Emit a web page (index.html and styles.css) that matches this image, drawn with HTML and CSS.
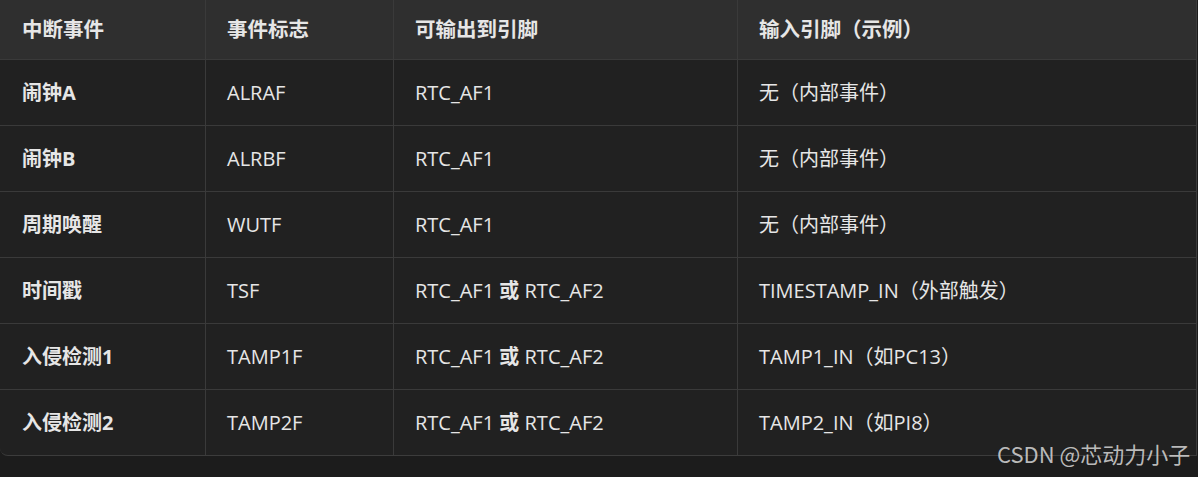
FILE: index.html
```html
<!DOCTYPE html>
<html lang="zh">
<head>
<meta charset="utf-8">
<link rel="stylesheet" href="styles.css">
</head>
<body>
<div class="wrap">
  <table class="tbl">
    <colgroup>
      <col class="c1"><col class="c2"><col class="c3"><col class="c4">
    </colgroup>
    <thead>
      <tr><th>中断事件</th><th>事件标志</th><th>可输出到引脚</th><th>输入引脚（示例）</th></tr>
    </thead>
    <tbody>
      <tr><td class="b">闹钟A</td><td>ALRAF</td><td>RTC_AF1</td><td>无（内部事件）</td></tr>
      <tr><td class="b">闹钟B</td><td>ALRBF</td><td>RTC_AF1</td><td>无（内部事件）</td></tr>
      <tr><td class="b">周期唤醒</td><td>WUTF</td><td>RTC_AF1</td><td>无（内部事件）</td></tr>
      <tr><td class="b">时间戳</td><td>TSF</td><td>RTC_AF1 <strong>或</strong> RTC_AF2</td><td>TIMESTAMP_IN（外部触发）</td></tr>
      <tr><td class="b">入侵检测1</td><td>TAMP1F</td><td>RTC_AF1 <strong>或</strong> RTC_AF2</td><td>TAMP1_IN（如PC13）</td></tr>
      <tr><td class="b">入侵检测2</td><td>TAMP2F</td><td>RTC_AF1 <strong>或</strong> RTC_AF2</td><td>TAMP2_IN（如PI8）</td></tr>
    </tbody>
  </table>
  <div class="wm">CSDN @芯动力小子</div>
</div>
</body>
</html>
```
FILE: styles.css
```css
html, body {
  margin: 0;
  padding: 0;
  background: #1c1c1c;
}
body {
  font-family: "Open Sans", "Noto Sans CJK SC", sans-serif;
  color: #e6e6e6;
  font-size: 20px;
}
.wrap {
  position: relative;
  width: 1198px;
  height: 477px;
}
.tbl {
  width: 1197px;
  border-collapse: separate;
  border-spacing: 0;
  border-right: 1px solid #3c3c3c;
  border-bottom: 1px solid #3c3c3c;
  border-bottom-left-radius: 8px;
  overflow: hidden;
  table-layout: fixed;
  background: #212121;
}
.c1 { width: 205px; }
.c2 { width: 188px; }
.c3 { width: 344px; }
.c4 { width: auto; }
th, td {
  text-align: left;
  padding: 0 0 0 21px;
  border-left: 1px solid #3a3a3a;
  border-bottom: 1px solid #3a3a3a;
  white-space: nowrap;
  line-height: 1.2;
}
th:first-child, td:first-child { border-left: none; padding-left: 22px; }
tbody tr:last-child td { border-bottom: none; }
th {
  background: #2f2f2f;
  height: 56px;
  padding-bottom: 3px;
  font-weight: 700;
  font-family: "Noto Sans CJK SC", sans-serif;
  font-size: 20.5px;
}
td {
  height: 65px;
  font-weight: 400;
}
td.b {
  font-weight: 700;
  font-family: "Open Sans", "Noto Sans CJK SC", sans-serif;
}
td strong {
  font-family: "Noto Sans CJK SC", sans-serif;
  font-weight: 700;
}
.wm {
  position: absolute;
  left: 997px;
  top: 437px;
  font-family: "Noto Sans CJK SC", sans-serif;
  font-size: 22px;
  color: rgba(215, 215, 215, 0.85);
}
```
